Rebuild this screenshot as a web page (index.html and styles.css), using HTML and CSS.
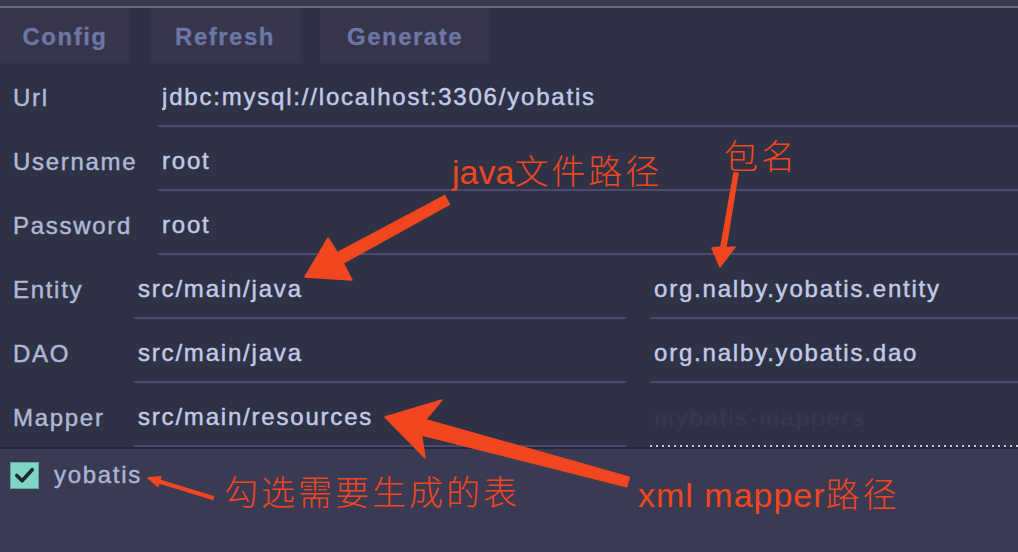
FILE: index.html
```html
<!DOCTYPE html>
<html lang="en">
<head>
<meta charset="utf-8">
<title>yobatis</title>
<link rel="stylesheet" href="styles.css">
</head>
<body>
<div class="app">
  <div class="top-strip"></div>
  <div class="toolbar">
    <button class="tool-btn btn-config">Config</button>
    <button class="tool-btn btn-refresh">Refresh</button>
    <button class="tool-btn btn-generate">Generate</button>
  </div>
  <div class="form">
    <div class="row">
      <label class="label label-wide">Url</label>
      <input class="field field-full" value="jdbc:mysql://localhost:3306/yobatis">
    </div>
    <div class="row">
      <label class="label label-wide">Username</label>
      <input class="field field-full" value="root">
    </div>
    <div class="row">
      <label class="label label-wide">Password</label>
      <input class="field field-full" value="root">
    </div>
    <div class="row">
      <label class="label label-narrow">Entity</label>
      <input class="field field-path" value="src/main/java">
      <input class="field field-pkg" value="org.nalby.yobatis.entity">
    </div>
    <div class="row">
      <label class="label label-narrow">DAO</label>
      <input class="field field-path" value="src/main/java">
      <input class="field field-pkg" value="org.nalby.yobatis.dao">
    </div>
    <div class="row">
      <label class="label label-narrow">Mapper</label>
      <input class="field field-path" value="src/main/resources">
      <input class="field field-pkg field-dotted" placeholder="mybatis-mappers">
    </div>
  </div>
  <div class="tables">
    <div class="table-item">
      <span class="checkbox">
        <svg viewBox="0 0 28 27" width="28" height="27"><path d="M6 13.5 L11.5 19 L22 7.5" fill="none" stroke="#232735" stroke-width="3.8" stroke-linecap="round" stroke-linejoin="round"/></svg>
      </span>
      <span class="table-name">yobatis</span>
    </div>
  </div>

  <div class="annotations">
    <svg class="arrows" viewBox="0 0 1018 552" width="1018" height="552">
      <g fill="#f1461f" stroke="#f1461f" stroke-width="1.5" stroke-linejoin="round">
        <polygon points="444.6,195.6 337.3,252.6 328,238 305,277 352,280 343.1,263.2 449.4,204.4"/>
        <polygon points="734,172.7 720.9,246.9 712,248 720,267 735,247 725.9,247.7 738,173.3"/>
        <polygon points="629.3,477.2 425.7,419.6 442,400 385,417 425,458 421.5,435 626.7,486.8"/>
        <polygon points="213.4,496.6 159.9,480.1 161,476.7 148,478 158,486.3 159.1,482.9 212.6,499.4"/>
      </g>
    </svg>
    <div class="note note-java">java<span class="cjk">文件路径</span></div>
    <div class="note note-pkg"><span class="cjk">包名</span></div>
    <div class="note note-check"><span class="cjk">勾选需要生成的表</span></div>
    <div class="note note-xml"><span class="latin">xml mapper</span><span class="cjk">路径</span></div>
  </div>
</div>
</body>
</html>
```

FILE: styles.css
```css
* {
  box-sizing: border-box;
}

html, body {
  margin: 0;
  padding: 0;
}

body {
  width: 1018px;
  height: 552px;
  overflow: hidden;
  background: #2f3245;
  font-family: "Liberation Sans", Arial, sans-serif;
}

.app {
  position: relative;
  width: 1018px;
  height: 552px;
  display: flex;
  flex-direction: column;
}

.top-strip {
  height: 8px;
  background: #393c4c;
  border-bottom: 2px solid #686a7b;
}

.toolbar {
  display: flex;
  gap: 20px;
  height: 55px;
  background: #2f3245;
}

.tool-btn {
  border: none;
  margin: 0;
  padding: 3px 0 0;
  background: #36354c;
  color: #6d77a6;
  font-family: "Liberation Sans", Arial, sans-serif;
  font-weight: bold;
  font-size: 24px;
  letter-spacing: 1.5px;
  text-align: center;
  -webkit-text-stroke: 0.3px #6d77a6;
}

.btn-config { width: 130px; }
.btn-refresh { width: 150px; }
.btn-generate { width: 170px; }

.form {
  display: flex;
  flex-direction: column;
}

.row {
  display: flex;
  height: 64px;
}

.label {
  padding: 6px 0 0 13px;
  display: flex;
  align-items: center;
  color: #b0b8d8;
  font-size: 24px;
  letter-spacing: 1.7px;
  -webkit-text-stroke: 0.45px #b0b8d8;
}

.label-wide { width: 158px; flex: none; }
.label-narrow { width: 134px; flex: none; }

.field {
  height: 64px;
  margin: 0;
  padding: 6px 0 0 4px;
  border: none;
  border-bottom: 2px solid #4c4b6d;
  background: transparent;
  color: #c2cae8;
  font-family: "Liberation Sans", Arial, sans-serif;
  font-size: 24px;
  letter-spacing: 1.8px;
  -webkit-text-stroke: 0.45px #c2cae8;
  outline: none;
  min-width: 0;
}

.field::placeholder {
  color: #363950;
  -webkit-text-stroke: 0;
}

.field-full { flex: 1; }
.field-path { width: 492px; flex: none; }
.field-pkg { flex: 1; margin-left: 24px; }

.field-dotted {
  border-bottom: none;
  -webkit-text-stroke: 0;
  background-image: linear-gradient(to right, #c9ccd8 2px, transparent 2px);
  background-size: 6px 2px;
  background-repeat: repeat-x;
  background-position: 0 100%;
}

.tables {
  flex: 1;
  background: #3a3a53;
  border-top: 2px solid #25273a;
  padding: 12px 0 0 10px;
}

.table-item {
  display: flex;
  align-items: center;
  gap: 15px;
}

.checkbox {
  width: 29px;
  height: 27px;
  background: #7ed6c6;
  border: 1px solid #5fa79b;
  display: flex;
  align-items: center;
  justify-content: center;
}

.checkbox svg {
  display: block;
}

.table-name {
  color: #aab3d8;
  font-size: 24px;
  letter-spacing: 1.7px;
  -webkit-text-stroke: 0.45px #aab3d8;
}

.annotations {
  position: absolute;
  left: 0;
  top: 0;
  width: 1018px;
  height: 552px;
  pointer-events: none;
}

.arrows {
  position: absolute;
  left: 0;
  top: 0;
}

.note {
  position: absolute;
  color: #f2461f;
  font-family: "Liberation Sans", "Noto Sans CJK SC", sans-serif;
  font-size: 34px;
  line-height: 34px;
  white-space: nowrap;
}

.cjk {
  font-family: "Noto Sans CJK SC", sans-serif;
  font-weight: 300;
  letter-spacing: 3px;
}

.latin {
  letter-spacing: 1px;
}

.note-java { left: 452px; top: 153px; }
.note-pkg { left: 724px; top: 138px; }
.note-check { left: 224px; top: 474px; }
.note-xml { left: 638px; top: 476px; }
```
